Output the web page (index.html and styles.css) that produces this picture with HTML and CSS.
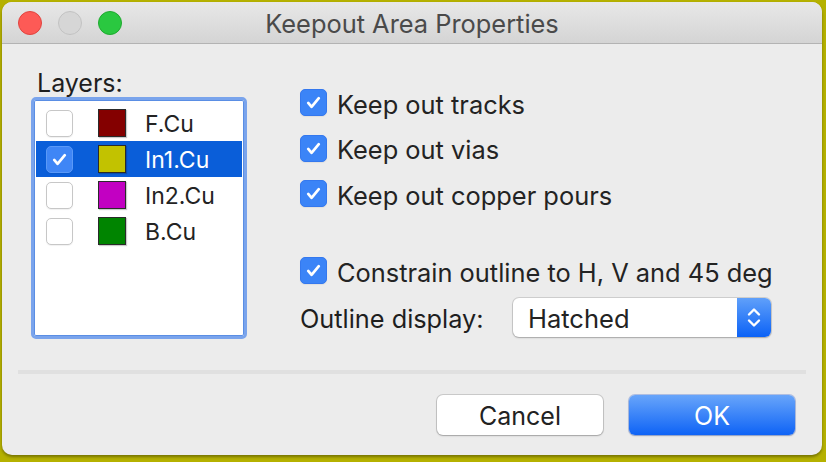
FILE: index.html
```html
<!DOCTYPE html>
<html>
<head>
<meta charset="utf-8">
<link rel="stylesheet" href="styles.css">
</head>
<body>
<div class="window">
  <div class="titlebar">
    <div class="lights">
      <span class="light red"></span>
      <span class="light gray"></span>
      <span class="light green"></span>
    </div>
    <div class="title">Keepout Area Properties</div>
    <div></div>
  </div>
  <div class="main">
    <div class="left">
      <div class="layers-label">Layers:</div>
      <div class="list">
        <div class="row">
          <span class="cb"></span>
          <span class="swatch" style="background:#840000"></span>
          <span class="name">F.Cu</span>
        </div>
        <div class="row selected">
          <span class="cb on"><svg viewBox="0 0 26 26"><path d="M7.5 13.5 L11 17.5 L18.5 8.5"/></svg></span>
          <span class="swatch" style="background:#c2c200"></span>
          <span class="name">In1.Cu</span>
        </div>
        <div class="row">
          <span class="cb"></span>
          <span class="swatch" style="background:#c200c2"></span>
          <span class="name">In2.Cu</span>
        </div>
        <div class="row">
          <span class="cb"></span>
          <span class="swatch" style="background:#008400"></span>
          <span class="name">B.Cu</span>
        </div>
      </div>
    </div>
    <div class="right">
      <div class="opt"><span class="cb on"><svg viewBox="0 0 26 26"><path d="M7.5 13.5 L11 17.5 L18.5 8.5"/></svg></span><span class="opt-text">Keep out tracks</span></div>
      <div class="opt"><span class="cb on"><svg viewBox="0 0 26 26"><path d="M7.5 13.5 L11 17.5 L18.5 8.5"/></svg></span><span class="opt-text">Keep out vias</span></div>
      <div class="opt"><span class="cb on"><svg viewBox="0 0 26 26"><path d="M7.5 13.5 L11 17.5 L18.5 8.5"/></svg></span><span class="opt-text">Keep out copper pours</span></div>
      <div class="opt constrain"><span class="cb on"><svg viewBox="0 0 26 26"><path d="M7.5 13.5 L11 17.5 L18.5 8.5"/></svg></span><span class="opt-text">Constrain outline to H, V and 45 deg</span></div>
      <div class="outline-row">
        <span class="outline-label">Outline display:</span>
        <div class="select">
          <span class="select-value">Hatched</span>
          <span class="select-arrows"><svg viewBox="0 0 34 38"><path d="M12 16 L17 11 L22 16 M12 22 L17 27 L22 22"/></svg></span>
        </div>
      </div>
    </div>
  </div>
  <div class="separator"></div>
  <div class="footer">
    <button class="btn cancel">Cancel</button>
    <button class="btn ok">OK</button>
  </div>
</div>
</body>
</html>
```
FILE: styles.css
```css
* { box-sizing: border-box; }
html, body { margin: 0; padding: 0; }
body {
  width: 826px;
  height: 462px;
  background: #b5b100;
  font-family: Inter, "Noto Sans", sans-serif;
  color: #232323;
  overflow: hidden;
}
.window {
  width: 820px;
  height: 453px;
  margin: 2px 0 0 2px;
  background: #ececec;
  border-radius: 10px;
  overflow: hidden;
  display: flex;
  flex-direction: column;
  box-shadow: 0 2px 3px rgba(0,0,0,0.35);
}
.titlebar {
  height: 42px;
  flex: none;
  background: linear-gradient(#e8e8e8, #d4d4d4);
  border-bottom: 1px solid #b3b3b3;
  display: grid;
  grid-template-columns: 1fr auto 1fr;
  align-items: center;
}
.lights {
  display: flex;
  gap: 16px;
  padding-left: 16px;
}
.light {
  width: 24px;
  height: 24px;
  border-radius: 50%;
  display: block;
}
.red { background: #fd5a56; border: 1px solid #e0443f; }
.gray { background: #d6d6d6; border: 1px solid #c2c2c2; }
.green { background: #2ac840; border: 1px solid #1fa92f; }
.title {
  font-size: 25.4px;
  line-height: 30px;
  margin-top: 2px;
  color: #4a4a4a;
}
.main {
  height: 326px;
  flex: none;
  display: flex;
}
.left {
  width: 269px;
  padding: 27px 0 0 29px;
}
.layers-label {
  font-size: 25px;
  line-height: 24px;
  padding-left: 6px;
  color: #1e1e1e;
}
.list {
  margin-top: 2px;
  width: 216px;
  height: 242px;
  background: #fff;
  border: 3px solid #7aa4ec;
  border-radius: 5px;
  box-shadow: inset 0 0 0 1px #5a8ee4;
  padding: 5px 2px;
}
.row {
  height: 36px;
  display: flex;
  align-items: center;
  padding-left: 10px;
  font-size: 23px;
}
.row.selected {
  background: #0a5ed9;
  color: #fff;
}
.name {
  margin-left: 19px;
  padding-top: 2px;
}
.cb {
  width: 27px;
  height: 27px;
  border-radius: 5px;
  background: #fff;
  border: 1px solid #c7c7c7;
  box-shadow: 0 1px 1px rgba(0,0,0,0.06);
  flex: none;
  display: block;
}
.cb.on {
  background: #3b84f7;
  border: 1px solid #3478ee;
}
.row.selected .cb.on {
  background: #3f86f6;
  border-color: #5a99f8;
}
.cb svg {
  display: block;
  width: 25px;
  height: 25px;
}
.cb svg path {
  fill: none;
  stroke: #fff;
  stroke-width: 2.8;
  stroke-linecap: round;
  stroke-linejoin: round;
}
.swatch {
  width: 28px;
  height: 28px;
  margin-left: 25px;
  border: 1px solid #2a2a2a;
  box-shadow: 1px 1px 1px rgba(0,0,0,0.2);
  flex: none;
}
.right {
  padding-top: 36px;
  padding-left: 29px;
  display: flex;
  flex-direction: column;
}
.opt {
  height: 45.5px;
  display: flex;
  align-items: center;
  gap: 10px;
  font-size: 25.4px;
}
.opt-text {
  padding-top: 3px;
}
.opt.constrain {
  margin-top: 31.5px;
}
.outline-row {
  margin-top: 4px;
  display: flex;
  align-items: center;
  height: 39px;
  font-size: 25.3px;
}
.outline-label {
  width: 213px;
  padding-top: 3px;
  color: #1e1e1e;
}
.select {
  width: 258px;
  height: 39px;
  background: #fff;
  border-radius: 6px;
  box-shadow: 0 0 0 1px rgba(0,0,0,0.12), 0 1px 2px rgba(0,0,0,0.2);
  display: flex;
  align-items: center;
  overflow: hidden;
}
.select-value {
  flex: 1;
  padding: 3px 0 0 15px;
  font-size: 25.5px;
}
.select-arrows {
  width: 34px;
  height: 39px;
  background: linear-gradient(#60a0fa, #0b62f6);
  display: block;
}
.select-arrows svg {
  display: block;
  width: 34px;
  height: 39px;
}
.select-arrows path {
  fill: none;
  stroke: #fff;
  stroke-width: 2.4;
  stroke-linecap: round;
  stroke-linejoin: round;
}
.separator {
  height: 4px;
  margin: 0 16px;
  background: #e0e0e0;
  flex: none;
}
.footer {
  display: flex;
  justify-content: flex-end;
  gap: 26px;
  padding: 21px 27px 0 0;
}
.btn {
  width: 166px;
  height: 40px;
  border-radius: 6px;
  font-family: Inter, "Noto Sans", sans-serif;
  font-size: 25px;
  padding: 2px 0 0 0;
}
.cancel {
  background: #fff;
  color: #222;
  border: none;
  box-shadow: 0 0 0 1px rgba(0,0,0,0.14), 0 1px 2px rgba(0,0,0,0.2);
}
.ok {
  background: linear-gradient(#68a5fa, #0e63f6);
  color: #fff;
  border: none;
  box-shadow: 0 0 0 1px rgba(0,60,200,0.25), 0 1px 2px rgba(0,0,0,0.2);
}
```
